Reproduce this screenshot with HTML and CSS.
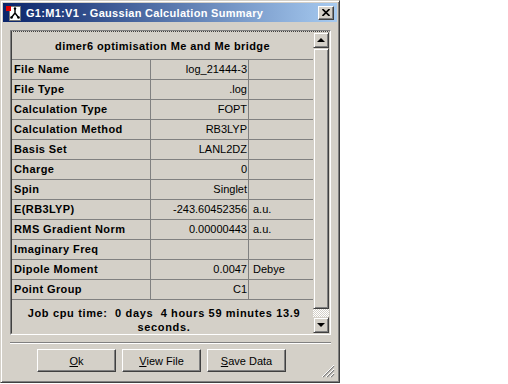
FILE: index.html
```html
<!DOCTYPE html>
<html>
<head>
<meta charset="utf-8">
<link rel="stylesheet" href="styles.css">
</head>
<body>
<div class="window">
  <div class="titlebar">
    <svg class="appicon" width="16" height="16" viewBox="0 0 16 16">
      <rect x="3.5" y="1.5" width="11" height="14" fill="#fff" stroke="#7a7a7a"/>
      <path d="M9 3 L9 8 M9 8 L5.5 12.5 M9 8 L12.5 12.5" stroke="#000" stroke-width="1.4" fill="none"/>
      <circle cx="9" cy="3.5" r="1.2" fill="#000"/>
      <circle cx="5.5" cy="12.5" r="1.3" fill="#000"/>
      <circle cx="12.5" cy="12.5" r="1.3" fill="#000"/>
      <rect x="0" y="1" width="5" height="5" fill="#e00000"/>
    </svg>
    <span class="title">G1:M1:V1 - Gaussian Calculation Summary</span>
    <div class="close">
      <svg width="8" height="7" viewBox="0 0 8 7"><path d="M0.5 0 L7.5 7 M7.5 0 L0.5 7" stroke="#000" stroke-width="1.6"/></svg>
    </div>
  </div>
  <div class="body">
    <div class="panel">
      <div class="panel-inner">
        <div class="grid">
          <div class="header">dimer6 optimisation Me and Me bridge</div>
          <div class="row"><div class="label">File Name</div><div class="val">log_21444-3</div><div class="unit"></div></div>
          <div class="row"><div class="label">File Type</div><div class="val">.log</div><div class="unit"></div></div>
          <div class="row"><div class="label">Calculation Type</div><div class="val">FOPT</div><div class="unit"></div></div>
          <div class="row"><div class="label">Calculation Method</div><div class="val">RB3LYP</div><div class="unit"></div></div>
          <div class="row"><div class="label">Basis Set</div><div class="val">LANL2DZ</div><div class="unit"></div></div>
          <div class="row"><div class="label">Charge</div><div class="val">0</div><div class="unit"></div></div>
          <div class="row"><div class="label">Spin</div><div class="val">Singlet</div><div class="unit"></div></div>
          <div class="row"><div class="label">E(RB3LYP)</div><div class="val">-243.60452356</div><div class="unit">a.u.</div></div>
          <div class="row"><div class="label">RMS Gradient Norm</div><div class="val">0.00000443</div><div class="unit">a.u.</div></div>
          <div class="row"><div class="label">Imaginary Freq</div><div class="val"></div><div class="unit"></div></div>
          <div class="row"><div class="label">Dipole Moment</div><div class="val">0.0047</div><div class="unit">Debye</div></div>
          <div class="row"><div class="label">Point Group</div><div class="val">C1</div><div class="unit"></div></div>
          <div class="cpu">Job cpu time:&nbsp; 0 days&nbsp; 4 hours 59 minutes 13.9 seconds.</div>
        </div>
        <div class="scrollbar">
          <div class="sb-btn"><span class="arrow-up"></span></div>
          <div class="thumb"></div>
          <div class="track"></div>
          <div class="sb-btn"><span class="arrow-down"></span></div>
        </div>
      </div>
    </div>
    <div class="sep"></div>
    <div class="buttons">
      <div class="btn"><span class="u">O</span>k</div>
      <div class="btn"><span class="u">V</span>iew File</div>
      <div class="btn"><span class="u">S</span>ave Data</div>
    </div>
  </div>
  <svg class="grip" width="13" height="13" viewBox="0 0 13 13">
    <path d="M12 1 L1 12 M12 5 L5 12 M12 9 L9 12" stroke="#808080" stroke-width="1.2"/>
    <path d="M12 0 L0 12 M12 4 L4 12 M12 8 L8 12" stroke="#fff" stroke-width="1"/>
  </svg>
</div>
</body>
</html>
```
FILE: styles.css
```css
html, body {
  margin: 0;
  padding: 0;
  background: #ffffff;
}
body {
  font-family: "Liberation Sans", Arial, sans-serif;
  font-size: 11px;
  color: #000;
}
.window {
  position: relative;
  width: 340px;
  height: 383px;
  box-sizing: border-box;
  background: #d4d0c8;
  border: 1px solid;
  border-color: #d4d0c8 #404040 #404040 #d4d0c8;
  box-shadow: inset 1px 1px #ffffff, inset -1px -1px #808080;
  padding: 2px;
  display: flex;
  flex-direction: column;
}
.titlebar {
  height: 19px;
  background: linear-gradient(to right, #0a246a, #a6caf0);
  display: flex;
  align-items: center;
  padding-left: 3px;
  padding-right: 3px;
}
.appicon {
  flex: none;
  margin-right: 4px;
}
.title {
  flex: 1;
  color: #fff;
  font-weight: bold;
  font-size: 11px;
  letter-spacing: 0.3px;
  white-space: nowrap;
}
.close {
  width: 14px;
  height: 12px;
  background: #d4d0c8;
  border: 1px solid;
  border-color: #fff #404040 #404040 #fff;
  box-shadow: inset -1px -1px #808080;
  display: flex;
  align-items: center;
  justify-content: center;
}
.body {
  flex: 1;
  padding: 8px 6px 0 7px;
  display: flex;
  flex-direction: column;
}
.panel {
  border: 1px solid;
  border-color: #808080 #fff #fff #808080;
}
.panel-inner {
  border: 1px solid;
  border-color: #404040 #d4d0c8 #d4d0c8 #404040;
  border-top-style: dotted;
  display: flex;
  height: 301px;
}
.grid {
  width: 301px;
  display: flex;
  flex-direction: column;
}
.header {
  height: 27px;
  border-bottom: 1px solid #808080;
  display: flex;
  align-items: center;
  justify-content: center;
  font-weight: bold;
  letter-spacing: 0.4px;
}
.row {
  display: flex;
  height: 19px;
  border-bottom: 1px solid #808080;
  line-height: 19px;
}
.label {
  width: 136px;
  padding-left: 2px;
  border-right: 1px solid #808080;
  font-weight: bold;
  letter-spacing: 0.4px;
  white-space: nowrap;
}
.val {
  width: 96px;
  padding-right: 1px;
  border-right: 1px solid #808080;
  text-align: right;
  white-space: nowrap;
}
.unit {
  width: 60px;
  padding-left: 4px;
  white-space: nowrap;
}
.cpu {
  flex: 1;
  padding-top: 6px;
  line-height: 14px;
  text-align: center;
  font-weight: bold;
  letter-spacing: 0.65px;
  white-space: pre-wrap;
  padding-left: 6px;
  padding-right: 3px;
  overflow: hidden;
}
.scrollbar {
  width: 16px;
  display: flex;
  flex-direction: column;
}
.sb-btn, .thumb {
  box-sizing: border-box;
  background: #d4d0c8;
  border: 1px solid;
  border-color: #d4d0c8 #404040 #404040 #d4d0c8;
  box-shadow: inset 1px 1px #fff, inset -1px -1px #808080;
}
.sb-btn {
  height: 16px;
  display: flex;
  align-items: center;
  justify-content: center;
}
.thumb {
  flex: 1;
}
.track {
  height: 8px;
  background-color: #d4d0c8;
  background-image: repeating-conic-gradient(#ffffff 0 25%, #d4d0c8 0 50%);
  background-size: 2px 2px;
}
.arrow-up, .arrow-down {
  width: 0;
  height: 0;
  border-left: 4px solid transparent;
  border-right: 4px solid transparent;
}
.arrow-up {
  border-bottom: 4px solid #000;
}
.arrow-down {
  border-top: 4px solid #000;
}
.sep {
  margin-top: 7px;
  border-top: 1px solid #808080;
  border-bottom: 1px solid #fff;
}
.buttons {
  display: flex;
  gap: 6px;
  padding-left: 27px;
  margin-top: 5px;
}
.btn {
  width: 79px;
  height: 23px;
  box-sizing: border-box;
  border: 1px solid;
  border-color: #fff #404040 #404040 #fff;
  box-shadow: inset -1px -1px #808080;
  display: flex;
  align-items: center;
  justify-content: center;
}
.u {
  text-decoration: underline;
}
.grip {
  position: absolute;
  right: 4px;
  bottom: 4px;
}
```
